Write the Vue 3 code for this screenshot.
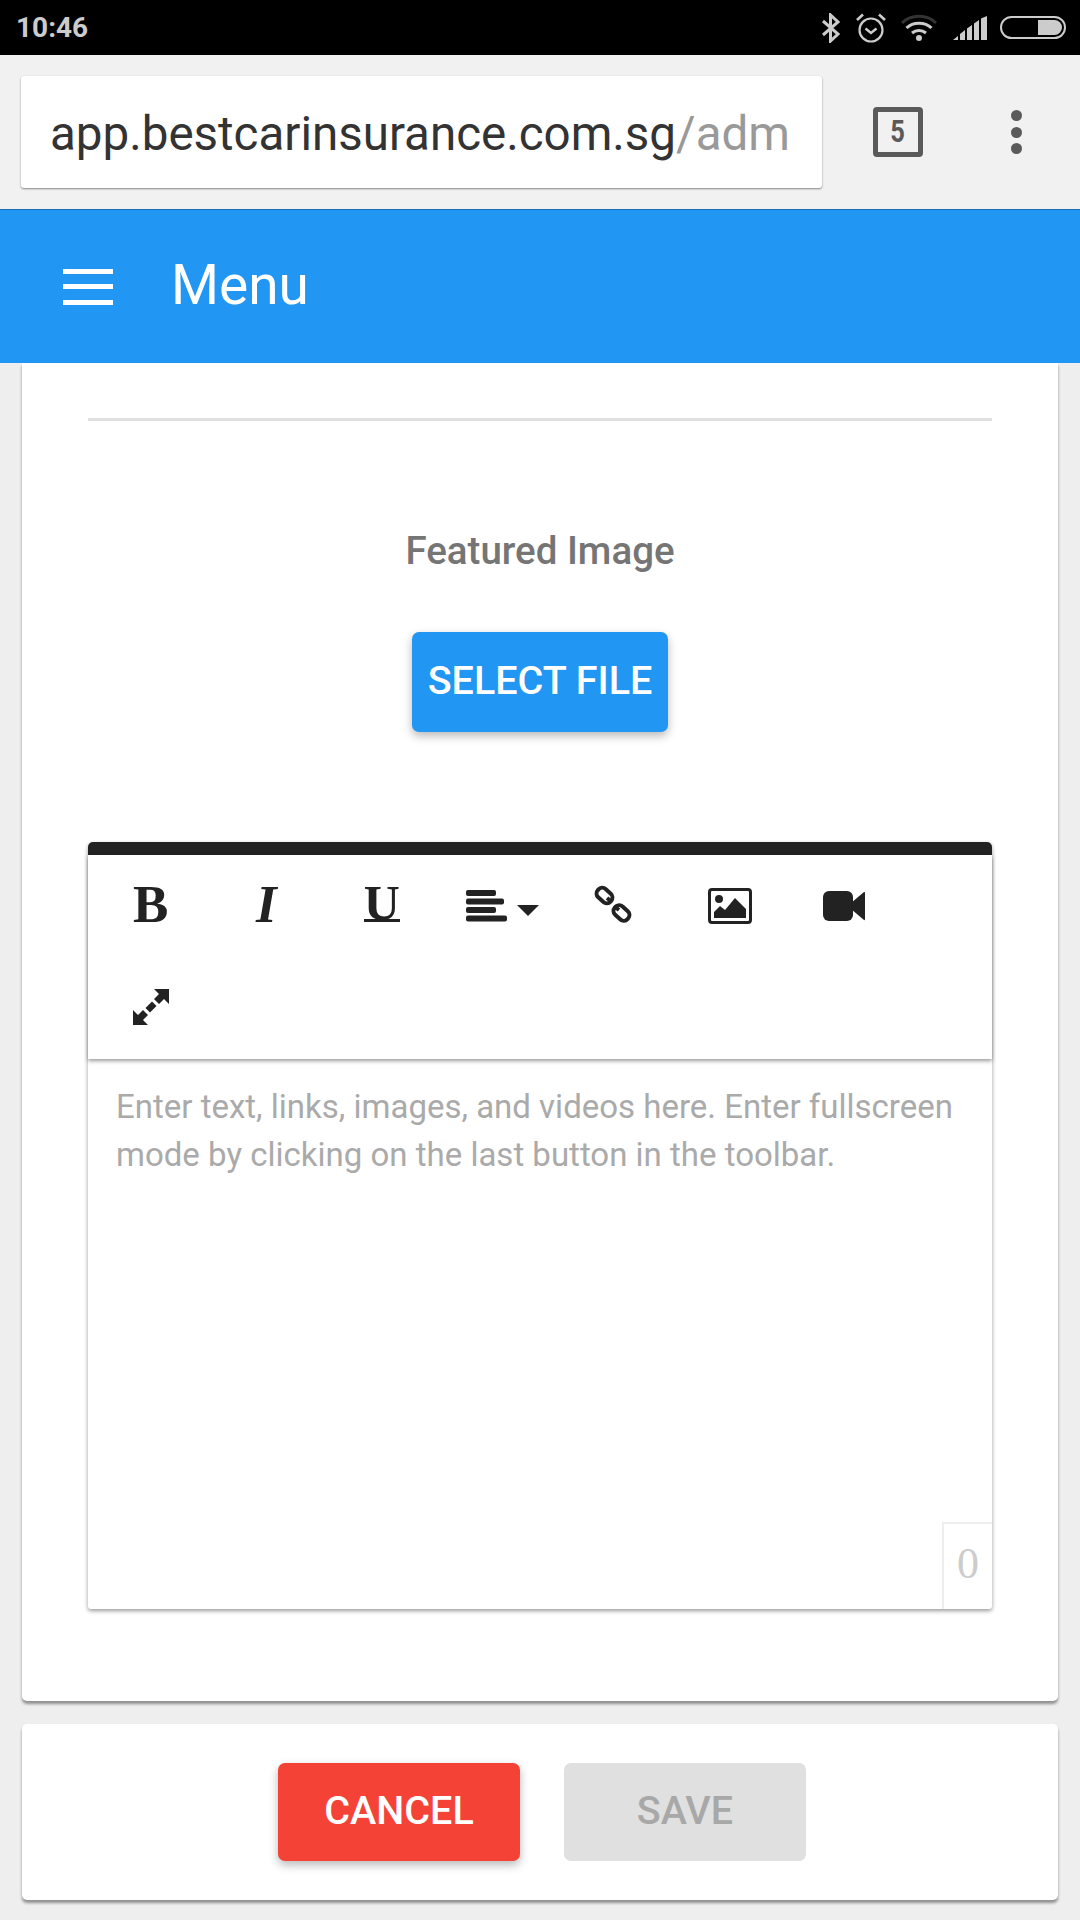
<template>
  <div class="screen">
    <!-- android status bar -->
    <div class="status-bar">
      <span class="time">10:46</span>
      <div class="status-icons">
        <svg class="ic-bt" width="20" height="30" viewBox="0 0 20 30">
          <path d="M2 8 L17 21 L9.5 28 V2 L17 9 L2 22" fill="none" stroke="#ccc" stroke-width="3" />
        </svg>
        <svg class="ic-alarm" width="30" height="30" viewBox="0 0 30 30">
          <circle cx="15" cy="17" r="11.5" fill="none" stroke="#ccc" stroke-width="2.2" />
          <path d="M9.5 15.5 L15 20 L20.5 15.5" fill="none" stroke="#ccc" stroke-width="2.4" />
          <path d="M1 7 L7 1.5 M29 7 L23 1.5" stroke="#ccc" stroke-width="2.6" />
        </svg>
        <svg class="ic-wifi" width="36" height="28" viewBox="0 0 36 28">
          <path d="M1 9 C10 0 26 0 35 9" fill="none" stroke="#333" stroke-width="3" />
          <path d="M5.5 14 C12 7.5 24 7.5 30.5 14" fill="none" stroke="#ccc" stroke-width="3" />
          <path d="M11 19 C15 15.500 21 15.500 25 19" fill="none" stroke="#ccc" stroke-width="3" />
          <circle cx="18" cy="24" r="3" fill="#ccc" />
        </svg>
        <svg class="ic-signal" width="34" height="24" viewBox="0 0 34 24">
          <path d="M0 24 L5 20 V24 Z M7 24 V18 L12 14 V24 Z M14 24 V12.500 L19 9 V24 Z M21 24 V7.500 L26 4 V24 Z M28 24 V2.500 L34 0 V24 Z" fill="#ccc" />
        </svg>
        <div class="battery"><div class="battery-fill" /></div>
      </div>
    </div>

    <!-- browser toolbar -->
    <div class="chrome-bar">
      <div class="url-box">
        <span class="url-host">app.bestcarinsurance.com.sg</span><span class="url-path">/adm</span>
      </div>
      <div class="tab-count"><span class="tab-num">5</span></div>
      <div class="chrome-menu">
        <i /><i /><i />
      </div>
    </div>

    <header class="app-header">
      <div class="burger"><i /><i /><i /></div>
      <span class="app-title">Menu</span>
    </header>

    <main class="content">
      <section class="card form-card">
        <hr class="divider" />
        <div class="field-label">Featured Image</div>
        <button class="btn btn-blue">SELECT FILE</button>

        <div class="editor">
          <div class="editor-toolbar">
            <div class="tool"><span class="glyph-b">B</span></div>
            <div class="tool"><span class="glyph-i">I</span></div>
            <div class="tool"><span class="glyph-u">U</span></div>
            <div class="tool tool-align">
              <svg width="74" height="34" viewBox="0 0 74 34">
                <g fill="#222">
                  <rect x="0" y="1" width="30" height="6" rx="2" />
                  <rect x="0" y="9.500" width="38" height="6" rx="2" />
                  <rect x="0" y="18" width="30" height="6" rx="2" />
                  <rect x="0" y="26.500" width="41" height="6" rx="2" />
                  <path d="M51 16 H73 L62 27 Z" />
                </g>
              </svg>
            </div>
            <div class="tool tool-link">
              <svg width="38" height="38" viewBox="0 0 38 38">
                <g fill="none" stroke="#222" stroke-width="4">
                  <rect x="2" y="5" width="17" height="11" rx="5" transform="rotate(42 10.500 10.500)" />
                  <rect x="19" y="22.500" width="17" height="11" rx="5" transform="rotate(42 27.500 28)" />
                  <path d="M13 13 L18 17 M20 21 L25 25" />
                </g>
              </svg>
            </div>
            <div class="tool tool-image">
              <svg width="44" height="36" viewBox="0 0 44 36">
                <rect x="1.500" y="1.500" width="41" height="33" rx="2.500" fill="none" stroke="#222" stroke-width="3" />
                <circle cx="11" cy="11" r="4" fill="#222" />
                <path d="M6 30 V24 L12 18 L17 22 L27 10 L38 21 V30 Z" fill="#222" />
              </svg>
            </div>
            <div class="tool">
              <svg width="42" height="30" viewBox="0 0 42 30">
                <rect x="0" y="0" width="30" height="30" rx="6" fill="#222" />
                <path d="M28 12 L41 1 Q42 0.500 42 2 V28 Q42 29.500 41 29 L28 18 Z" fill="#222" />
              </svg>
            </div>
            <div class="tool">
              <svg width="36" height="36" viewBox="0 0 36 36">
                <path d="M21 0 H36 V15 L31 10 L26 15 L21 10 L26 5 Z" fill="#222" />
                <path d="M15 36 H0 V21 L5 26 L10 21 L15 26 L10 31 Z" fill="#222" />
                <path d="M12.500 19 L19 12.500 L23.500 17 L17 23.500 Z" fill="#222" />
              </svg>
            </div>
          </div>
          <div class="editor-body">
            <p class="placeholder">Enter text, links, images, and videos here. Enter fullscreen mode by clicking on the last button in the toolbar.</p>
            <div class="counter">0</div>
          </div>
        </div>
      </section>

      <section class="card action-card">
        <button class="btn btn-red">CANCEL</button>
        <button class="btn btn-off">SAVE</button>
      </section>
    </main>
  </div>
</template>

<script setup>
</script>

<style>
html,
body {
  margin: 0;
  background: #eeeeee;
}
</style>

<style scoped>
.screen {
  width: 1080px;
  height: 1920px;
  overflow: hidden;
  background: #eeeeee;
  font-family: Roboto, "Liberation Sans", sans-serif;
}

.status-bar {
  height: 55px;
  background: #000;
  display: flex;
  align-items: center;
  justify-content: space-between;
  padding: 0 14px 0 16px;
  box-sizing: border-box;
}
.time {
  font-size: 28px;
  font-weight: 700;
  color: #cccccc;
}
.status-icons {
  display: flex;
  align-items: center;
}
.ic-bt {
  margin-right: 15px;
}
.ic-alarm {
  margin-right: 15px;
}
.ic-wifi {
  margin-right: 16px;
}
.ic-signal {
  margin-right: 13px;
}
.battery {
  width: 66px;
  height: 23px;
  border: 2px solid #cccccc;
  border-radius: 12px;
  box-sizing: border-box;
  padding: 2px;
  display: flex;
  justify-content: flex-end;
}
.battery-fill {
  width: 24px;
  background: #cccccc;
  border-radius: 0 9px 9px 0;
}

.chrome-bar {
  height: 155px;
  background: #f1f1f1;
  display: flex;
  align-items: center;
  box-sizing: border-box;
  padding: 0 0 0 21px;
  border-bottom: 1px solid #1b6eb5;
}
.url-box {
  width: 801px;
  height: 112px;
  box-sizing: border-box;
  padding: 0 29px;
  background: #fff;
  border-radius: 3px;
  box-shadow: 0 1px 2px rgba(0, 0, 0, 0.45);
  font-size: 47.500px;
  line-height: 116px;
  white-space: nowrap;
  overflow: hidden;
}
.url-host {
  color: #333333;
}
.url-path {
  color: #999999;
}
.tab-count {
  width: 50px;
  height: 50px;
  box-sizing: border-box;
  margin-left: 51px;
  border: 5px solid #5a5a5a;
  border-radius: 4px;
  color: #5a5a5a;
  font-size: 30px;
  font-weight: 700;
  line-height: 40px;
  text-align: center;
}
.tab-num {
  display: inline-block;
  transform: scale(0.85, 1.05);
}
.chrome-menu {
  margin-left: 88px;
  display: flex;
  flex-direction: column;
  gap: 5.500px;
}
.chrome-menu i {
  display: block;
  width: 11px;
  height: 11px;
  border-radius: 50%;
  background: #5a5a5a;
}

.app-header {
  height: 153px;
  background: #2196f3;
  display: flex;
  align-items: center;
  position: relative;
  z-index: 2;
}
.burger {
  margin-left: 63px;
  width: 50px;
  display: flex;
  flex-direction: column;
  gap: 10.500px;
}
.burger i {
  display: block;
  height: 5px;
  background: #fff;
}
.app-title {
  margin-left: 58px;
  margin-top: -4px;
  font-size: 55px;
  color: #fff;
}

.content {
  padding: 0 22px;
}
.card {
  background: #fff;
  border-radius: 0 0 5px 5px;
  box-shadow: 0 3px 3px rgba(0, 0, 0, 0.4);
}
.form-card {
  height: 1338px;
  box-sizing: border-box;
  padding: 55px 66px 0;
  text-align: center;
}
.divider {
  margin: 0;
  border: none;
  height: 3px;
  background: #e0e0e0;
}
.field-label {
  margin-top: 109px;
  font-size: 38.500px;
  line-height: 42px;
  font-weight: 500;
  color: #757575;
}
.btn {
  border: none;
  border-radius: 7px;
  font-family: inherit;
  font-weight: 500;
  font-size: 39.500px;
  box-sizing: border-box;
  padding: 0 0 3px;
}
.btn-blue {
  display: block;
  margin: 60px auto 0;
  width: 256px;
  height: 100px;
  background: #2196f3;
  color: #fff;
  box-shadow: 0 4px 10px rgba(0, 0, 0, 0.28);
}

.editor {
  margin-top: 110px;
  height: 767px;
  display: flex;
  flex-direction: column;
  background: #fff;
  border-top: 13px solid #222222;
  border-radius: 5px 5px 3px 3px;
  box-shadow: 0 2px 4px rgba(0, 0, 0, 0.4);
  box-sizing: border-box;
  text-align: left;
}
.editor-toolbar {
  height: 204px;
  display: flex;
  flex-wrap: wrap;
  align-content: flex-start;
  padding-left: 5px;
  box-shadow: 0 2px 4px rgba(0, 0, 0, 0.4);
  position: relative;
}
.tool {
  width: 115.500px;
  height: 101px;
  display: flex;
  align-items: center;
  justify-content: center;
  color: #222222;
  font-family: "Liberation Serif", serif;
}
.tool-align svg {
  margin-left: 12px;
}
.tool-link svg {
  margin-top: -4px;
}
.tool-image svg {
  margin-left: 4px;
}
.glyph-b {
  font-size: 53px;
  font-weight: 700;
  margin-top: -4px;
}
.glyph-i {
  font-size: 53px;
  font-weight: 700;
  font-style: italic;
  margin-top: -4px;
}
.glyph-u {
  font-size: 50px;
  font-weight: 700;
  line-height: 34px;
  height: 33px;
  border-bottom: 3px solid #222222;
  margin-top: -3px;
}
.editor-body {
  flex: 1;
  position: relative;
}
.placeholder {
  margin: 0;
  padding: 24px 28px 0;
  font-size: 33px;
  line-height: 48px;
  color: #aaaaaa;
}
.counter {
  position: absolute;
  right: 0;
  bottom: 0;
  width: 50px;
  height: 87px;
  box-sizing: border-box;
  border: 2px solid #eeeeee;
  border-right: none;
  border-bottom: none;
  font-family: "Liberation Serif", serif;
  font-size: 44px;
  line-height: 80px;
  color: #cccccc;
  text-align: center;
}

.action-card {
  margin-top: 23px;
  height: 176px;
  border-radius: 5px;
  box-sizing: border-box;
  padding: 39px 0 0 4px;
  display: flex;
  justify-content: center;
  align-items: flex-start;
  gap: 44px;
}
.btn-red,
.btn-off {
  width: 242px;
  height: 98px;
}
.btn-red {
  background: #f44336;
  color: #fff;
  box-shadow: 0 4px 10px rgba(0, 0, 0, 0.28);
}
.btn-off {
  background: #e0e0e0;
  color: #a8a8a8;
}
</style>
